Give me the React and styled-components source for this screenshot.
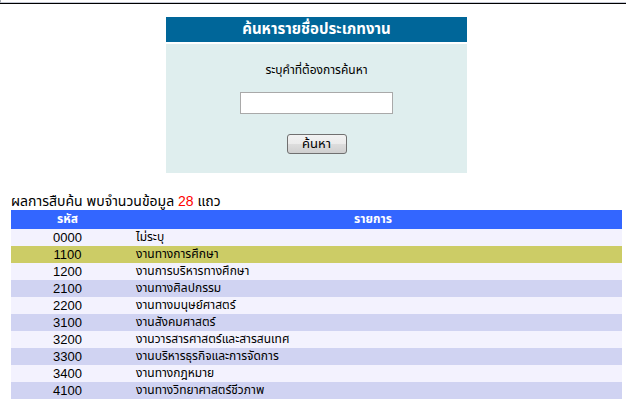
import React from "react"
import styled, { createGlobalStyle } from "styled-components"

const GlobalStyle = createGlobalStyle`
  body {
    margin: 0;
    background: #fff;
    font-family: "Liberation Sans", "Noto Sans Thai", "Noto Sans", sans-serif;
    color: #000;
  }
`

const Frame = styled.div`
  height: 3px;
  box-sizing: border-box;
  border-left: 1px solid #a4a8b0;
  border-bottom: 1px solid #c4c8d4;
  box-shadow: 0 1px 0 #000;
`

const Page = styled.div`
  margin: 14px 4px 0 11px;
`

const SearchPanel = styled.div`
  width: 301px;
  margin: 0 auto;
`

const PanelTitle = styled.div`
  height: 25px;
  background: #006699;
  color: #fff;
  font-weight: bold;
  font-size: 15px;
  display: flex;
  align-items: center;
  justify-content: center;
  margin-bottom: 2px;
`

const PanelBody = styled.div`
  height: 129px;
  box-sizing: border-box;
  background: #dfeeee;
  display: flex;
  flex-direction: column;
  align-items: center;
  padding-top: 17px;
`

const Label = styled.div`
  font-size: 12px;
  line-height: 18px;
`

const SearchInput = styled.input`
  margin-top: 13px;
  width: 153px;
  height: 22px;
  box-sizing: border-box;
  border: 1px solid #a9a9a9;
  background: #fff;
  padding: 0 3px;
`

const SearchButton = styled.button`
  margin-top: 20px;
  width: 60px;
  height: 20px;
  box-sizing: border-box;
  border: 1px solid #707070;
  border-radius: 3px;
  background: linear-gradient(#f2f2f2, #ebebeb 50%, #dddddd 51%, #cfcfcf);
  font-family: inherit;
  font-size: 13px;
  line-height: 18px;
  padding: 0;
  color: #000;
`

const ResultLine = styled.div`
  margin-top: 20px;
  font-size: 14px;
  line-height: 17px;
  height: 17px;
`

const Count = styled.span`
  color: #ff0000;
`

const Table = styled.table`
  width: 100%;
  border-collapse: collapse;
  table-layout: fixed;
  font-size: 13px;
`

const HeadCell = styled.th`
  height: 19px;
  line-height: 19px;
  padding: 0;
  background: #3366ff;
  color: #fff;
  font-size: 12px;
  font-weight: bold;
  text-align: center;
  width: ${p => p.$w || "auto"};
`

const Row = styled.tr`
  background: ${p => (p.$hl ? "#cccc66" : p.$odd ? "#d0d3f2" : "#f3f2fe")};

  td {
    height: 17px;
    line-height: 17px;
    padding-top: 0;
    padding-bottom: 0;
    white-space: nowrap;
  }
`

const CodeCell = styled.td`
  padding: 0;
  text-align: center;
`

const NameCell = styled.td`
  padding: 0 0 0 12px;
  font-size: 12px;
`

const CellText = styled.div`
  height: 17px;
  overflow: visible;
`

const rows = [
  ["0000", "ไม่ระบุ"],
  ["1100", "งานทางการศึกษา"],
  ["1200", "งานการบริหารทางศึกษา"],
  ["2100", "งานทางศิลปกรรม"],
  ["2200", "งานทางมนุษย์ศาสตร์"],
  ["3100", "งานสังคมศาสตร์"],
  ["3200", "งานวารสารศาสตร์และสารสนเทศ"],
  ["3300", "งานบริหารธุรกิจและการจัดการ"],
  ["3400", "งานทางกฎหมาย"],
  ["4100", "งานทางวิทยาศาสตร์ชีวภาพ"],
]

export default function App() {
  return (
    <>
      <GlobalStyle />
      <Frame />
      <Page>
        <SearchPanel>
          <PanelTitle>ค้นหารายชื่อประเภทงาน</PanelTitle>
          <PanelBody>
            <Label>ระบุคำที่ต้องการค้นหา</Label>
            <SearchInput type="text" />
            <SearchButton>ค้นหา</SearchButton>
          </PanelBody>
        </SearchPanel>
        <ResultLine>
          ผลการสืบค้น พบจำนวนข้อมูล <Count>28</Count> แถว
        </ResultLine>
        <Table>
          <thead>
            <tr>
              <HeadCell $w="113px">รหัส</HeadCell>
              <HeadCell>รายการ</HeadCell>
            </tr>
          </thead>
          <tbody>
            {rows.map(([code, name], i) => (
              <Row key={code} $odd={i % 2 === 1} $hl={code === "1100"}>
                <CodeCell><CellText>{code}</CellText></CodeCell>
                <NameCell><CellText>{name}</CellText></NameCell>
              </Row>
            ))}
          </tbody>
        </Table>
      </Page>
    </>
  )
}
